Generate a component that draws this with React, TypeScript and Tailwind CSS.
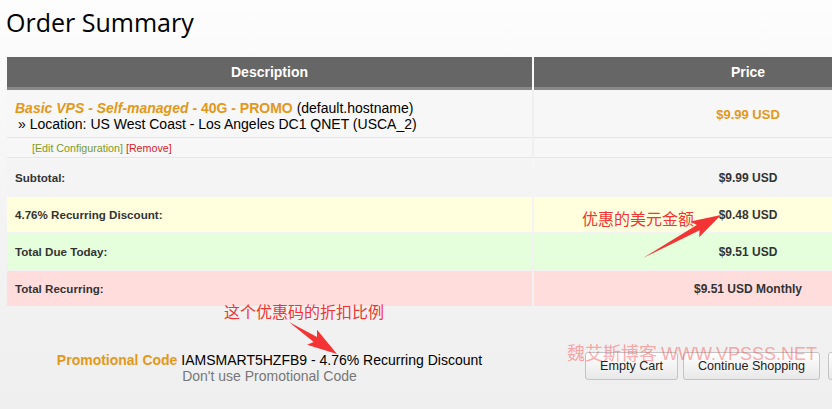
import React from "react";

const sans = { fontFamily: '"Liberation Sans", Arial, sans-serif' };
const cjk = { fontFamily: '"Noto Sans CJK SC", "Liberation Sans", sans-serif' };

interface TotalRowProps {
  label: string;
  value: string;
  bg: string;
}

function TotalRow({ label, value, bg }: TotalRowProps) {
  return (
    <div className="flex gap-[2px] mt-[2px]">
      <div className={`w-[525px] h-[35px] flex items-center pl-[8px] text-[11.6px] font-bold text-[#333] ${bg}`}>
        {label}
      </div>
      <div className={`w-[428px] h-[35px] flex items-center justify-center text-[12px] font-bold text-[#333] ${bg}`}>
        {value}
      </div>
    </div>
  );
}

function Arrow({ x1, y1, x2, y2 }: { x1: number; y1: number; x2: number; y2: number }) {
  // arrow drawn along +x then rotated into place
  const dx = x2 - x1;
  const dy = y2 - y1;
  const len = Math.sqrt(dx * dx + dy * dy);
  const ang = (Math.atan2(dy, dx) * 180) / Math.PI;
  const h = 26;
  return (
    <svg className="absolute left-0 top-0 pointer-events-none" width="832" height="409">
      <g transform={`translate(${x1} ${y1}) rotate(${ang})`}>
        <polygon
          points={`0,0 ${len - h},-3 ${len - h - 4},-9 ${len},0 ${len - h - 4},9 ${len - h},3`}
          fill="#f43434"
        />
      </g>
    </svg>
  );
}

const btn =
  "h-[28px] px-[14px] text-[12.6px] text-[#222] border border-[#c4c4c4] rounded-[3px] bg-gradient-to-b from-white to-[#e8e8e8] shadow-[inset_0_1px_0_#fff] whitespace-nowrap";

export default function App() {
  return (
    <div
      className="relative w-[832px] h-[409px] overflow-hidden bg-gradient-to-b from-[#fdfdfd] via-[#f4f4f4] to-[#efefef]"
      style={sans}
    >
      <h1 className="pl-[6px] pt-[4px] text-[25px] leading-[36px] text-black" style={{ fontFamily: '"Open Sans", sans-serif' }}>
        Order Summary
      </h1>

      <div className="mt-[17px] ml-[7px] w-[955px]">
        {/* header */}
        <div className="flex gap-[2px]">
          <div className="w-[525px] h-[33px] bg-[#666] border-b-[3px] border-[#888] flex items-center justify-center text-[14px] font-bold text-white">
            Description
          </div>
          <div className="w-[428px] h-[33px] bg-[#666] border-b-[3px] border-[#888] flex items-center justify-center text-[14px] font-bold text-white">
            Price
          </div>
        </div>

        {/* product */}
        <div className="flex gap-[2px] bg-[#f0f0f0]">
          <div className="w-[525px] bg-[#f7f7f7]">
            <div className="h-[48px] pl-[8px] pt-[10px] text-[14px] leading-[16px] text-black border-b border-[#e6e6e6]">
              <div>
                <span className="font-bold italic text-[#e3981a]">Basic VPS - Self-managed</span>
                <span className="font-bold text-[#e3981a]"> - 40G - PROMO</span> (default.hostname)
              </div>
              <div className="pl-[3px]">» Location: US West Coast - Los Angeles DC1 QNET (USCA_2)</div>
            </div>
            <div className="h-[20px] pl-[25px] pt-[2px] flex items-center text-[10.7px] border-b border-[#e6e6e6]">
              <span className="text-[#7d9a26]">[Edit Configuration]</span>
              <span className="ml-[3px] text-[#d21f1f]">[Remove]</span>
            </div>
          </div>
          <div className="w-[428px] bg-[#f7f7f7]">
            <div className="h-[48px] pt-[2px] flex items-center justify-center text-[13px] font-bold text-[#e3981a] border-b border-[#e6e6e6]">
              $9.99 USD
            </div>
            <div className="h-[20px] border-b border-[#e6e6e6]" />
          </div>
        </div>

        <TotalRow label="Subtotal:" value="$9.99 USD" bg="bg-[#f4f4f4]" />
        <TotalRow label="4.76% Recurring Discount:" value="$0.48 USD" bg="bg-[#ffffdd]" />
        <TotalRow label="Total Due Today:" value="$9.51 USD" bg="bg-[#e5ffdc]" />
        <TotalRow label="Total Recurring:" value="$9.51 USD Monthly" bg="bg-[#ffdddd]" />

        {/* promo + buttons */}
        <div className="flex gap-[2px] mt-[46px]">
          <div className="w-[525px] flex flex-col items-center text-[14px] leading-[16px]">
            <div className="text-black">
              <span className="font-bold text-[#e3981a]">Promotional Code</span> IAMSMART5HZFB9 - 4.76% Recurring Discount
            </div>
            <div className="text-[#777]">Don't use Promotional Code</div>
          </div>
          <div className="w-[428px] pl-[51px] flex">
            <button className={btn}>Empty Cart</button>
            <button className={`${btn} ml-[5px]`}>Continue Shopping</button>
            <button className={`${btn} ml-[8px]`}>Checkout</button>
          </div>
        </div>
      </div>

      {/* annotations */}
      <div className="absolute left-[582px] top-[207px] text-[16px] leading-[22px] text-[#f43434]" style={cjk}>
        优惠的美元金额
      </div>
      <div className="absolute left-[224px] top-[300px] text-[16px] leading-[22px] text-[#f43434]" style={cjk}>
        这个优惠码的折扣比例
      </div>
      <Arrow x1={643} y1={258} x2={721} y2={215} />
      <Arrow x1={289} y1={322} x2={337} y2={354} />

      <div
        className="absolute left-[567px] top-[340px] text-[18px] leading-[24px] text-[#ff2b2b]/40 whitespace-nowrap pointer-events-none"
        style={cjk}
      >
        魏艾斯博客 <span style={sans}>WWW.VPSSS.NET</span>
      </div>
    </div>
  );
}
